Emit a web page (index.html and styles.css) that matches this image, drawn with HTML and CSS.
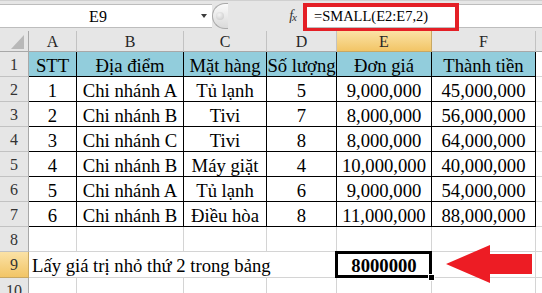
FILE: index.html
```html
<!DOCTYPE html>
<html lang="vi">
<head>
<meta charset="utf-8">
<title>SMALL</title>
<link rel="stylesheet" href="styles.css">
</head>
<body>
<div class="fbar">
  <div class="namebox"><span class="ref">E9</span><span class="dd"></span></div>
  <div class="grip"><span class="dot"></span></div>
  <div class="fx"><i>f</i><i class="x">x</i></div>
  <div class="finput"><span class="ftext">=SMALL(E2:E7,2)</span><span class="hl"></span></div>
</div>
<div class="sheet">
  <div class="c ch corner"><svg width="13" height="14" viewBox="0 0 13 14"><polygon points="0,14 13,0 13,14" fill="#b8b8b8"/></svg></div>
  <div class="c ch">A</div><div class="c ch">B</div><div class="c ch">C</div><div class="c ch">D</div><div class="c ch on">E</div><div class="c ch">F</div><div class="c ch g"></div>

  <div class="c rh">1</div>
  <div class="c d hd">STT</div><div class="c d hd">Địa điểm</div><div class="c d hd">Mặt hàng</div><div class="c d hd">Số lượng</div><div class="c d hd">Đơn giá</div><div class="c d hd">Thành tiền</div><div class="c g"></div>

  <div class="c rh">2</div>
  <div class="c d">1</div><div class="c d">Chi nhánh A</div><div class="c d">Tủ lạnh</div><div class="c d">5</div><div class="c d">9,000,000</div><div class="c d">45,000,000</div><div class="c g"></div>

  <div class="c rh">3</div>
  <div class="c d">2</div><div class="c d">Chi nhánh B</div><div class="c d">Tivi</div><div class="c d">7</div><div class="c d">8,000,000</div><div class="c d">56,000,000</div><div class="c g"></div>

  <div class="c rh">4</div>
  <div class="c d">3</div><div class="c d">Chi nhánh C</div><div class="c d">Tivi</div><div class="c d">8</div><div class="c d">8,000,000</div><div class="c d">64,000,000</div><div class="c g"></div>

  <div class="c rh">5</div>
  <div class="c d">4</div><div class="c d">Chi nhánh B</div><div class="c d">Máy giặt</div><div class="c d">4</div><div class="c d">10,000,000</div><div class="c d">40,000,000</div><div class="c g"></div>

  <div class="c rh">6</div>
  <div class="c d">5</div><div class="c d">Chi nhánh A</div><div class="c d">Tủ lạnh</div><div class="c d">6</div><div class="c d">9,000,000</div><div class="c d">54,000,000</div><div class="c g"></div>

  <div class="c rh">7</div>
  <div class="c d">6</div><div class="c d">Chi nhánh B</div><div class="c d">Điều hòa</div><div class="c d">8</div><div class="c d">11,000,000</div><div class="c d">88,000,000</div><div class="c g"></div>

  <div class="c rh">8</div>
  <div class="c"></div><div class="c"></div><div class="c"></div><div class="c"></div><div class="c"></div><div class="c"></div><div class="c g"></div>

  <div class="c rh on">9</div>
  <div class="c txt span4">Lấy giá trị nhỏ thứ 2 trong bảng</div><div class="c val sel">8000000</div><div class="c"></div><div class="c g"></div>

  <div class="c rh">10</div>
  <div class="c"></div><div class="c"></div><div class="c"></div><div class="c"></div><div class="c"></div><div class="c"></div><div class="c g"></div>

  <svg class="arrow" width="90" height="42" viewBox="0 0 90 42"><polygon points="2,21 46,2 46,11 88,11 88,31 46,31 46,40" fill="#ed1c24"/></svg>
</div>
</body>
</html>
```
FILE: styles.css
```css
body {
  margin: 0;
  width: 542px;
  height: 293px;
  overflow: hidden;
  background: #fff;
  font-family: "Liberation Serif", "Times New Roman", serif;
  color: #000;
}

/* formula bar */
.fbar {
  display: flex;
  box-sizing: border-box;
  height: 31px;
  padding: 3px 0;
  background: #e6e6e6;
  border-top: 1px solid #d0d0d0;
}
.namebox {
  display: flex;
  align-items: center;
  box-sizing: border-box;
  width: 212px;
  background: #fff;
  border-top: 1px solid #bdbdbd;
  border-bottom: 1px solid #bdbdbd;
}
.ref {
  width: 196px;
  text-align: center;
  font-size: 16px;
  line-height: 20px;
  padding-top: 1px;
}
.dd {
  width: 0;
  height: 0;
  margin-left: 5px;
  border-left: 3px solid transparent;
  border-right: 3px solid transparent;
  border-top: 4px solid #3c3c3c;
}
.grip {
  display: flex;
  align-items: center;
  box-sizing: border-box;
  width: 16px;
  margin-top: -1px;
  margin-bottom: -1px;
  border: 1px solid #a9a9a9;
  border-right: none;
  border-radius: 13px 0 0 13px;
  background: linear-gradient(#fafafa, #dadada);
}
.dot {
  width: 8px;
  height: 8px;
  margin-left: 3px;
  border-radius: 50%;
  background: radial-gradient(circle at 40% 35%, #f4f4f4, #c4c4c4);
}
.fx {
  width: 75px;
  box-sizing: border-box;
  padding-right: 6px;
  text-align: right;
  font-size: 14px;
  line-height: 24px;
  color: #333;
}
.fx i {
  font-style: italic;
}
.fx .x {
  font-size: 11px;
  position: relative;
  top: 1px;
  margin-left: -1px;
}
.finput {
  position: relative;
  flex: 1;
  box-sizing: border-box;
  background: #fff;
  border-top: 1px solid #bdbdbd;
  border-bottom: 1px solid #bdbdbd;
  padding-left: 11px;
  font-size: 14.5px;
  line-height: 23px;
}
.hl {
  position: absolute;
  left: 0;
  top: -2px;
  width: 156px;
  height: 29px;
  box-sizing: border-box;
  border: 4px solid #e41f26;
}

/* sheet */
.sheet {
  position: relative;
  display: grid;
  grid-template-columns: 29px 48px 107px 83px 70px 95px 104px 1fr;
  grid-template-rows: 21px repeat(7, 25px) 25px 26px 25px;
}
.c {
  box-sizing: border-box;
  border-right: 1px solid #d4d4d4;
  border-bottom: 1px solid #d4d4d4;
  white-space: nowrap;
  text-align: center;
  font-size: 18.67px;
  line-height: 24px;
  padding-top: 2px;
}
.c.g {
  border-right: none;
}
.ch {
  background: #e6e6e6;
  border-right: 1px solid #c2c2c2;
  border-bottom: 1px solid #a8a8a8;
  font-size: 16px;
  line-height: 20px;
  padding-top: 1px;
  color: #262626;
}
.rh {
  background: #e6e6e6;
  border-right: 1px solid #a8a8a8;
  border-bottom: 1px solid #c2c2c2;
  font-size: 16px;
  line-height: 20px;
  padding-top: 3px;
  color: #333;
  overflow: hidden;
}
.ch.on,
.rh.on {
  background: linear-gradient(#fbe2a6, #f2c566);
  border-right-color: #c8a863;
  border-bottom-color: #c8a863;
}
.corner {
  display: flex;
  justify-content: flex-end;
  align-items: flex-end;
  padding: 0 4px 2px 0;
  border-right-color: #a8a8a8;
}
.d {
  border-right: 1px solid #000;
  border-bottom: 1px solid #000;
}
.hd {
  background: #92cddc;
}
.span4 {
  grid-column: span 4;
}
.txt {
  text-align: left;
  padding-left: 3px;
}
.val {
  font-weight: bold;
}
.sel {
  position: relative;
}
.sel::after {
  content: "";
  position: absolute;
  left: -2px;
  top: -1px;
  right: -1px;
  bottom: -1px;
  border: 3px solid #000;
}
.sel::before {
  content: "";
  position: absolute;
  right: -4px;
  bottom: -4px;
  width: 5px;
  height: 5px;
  background: #000;
  border: 1px solid #fff;
  z-index: 1;
}
.arrow {
  position: absolute;
  left: 444px;
  top: 212px;
}
```
